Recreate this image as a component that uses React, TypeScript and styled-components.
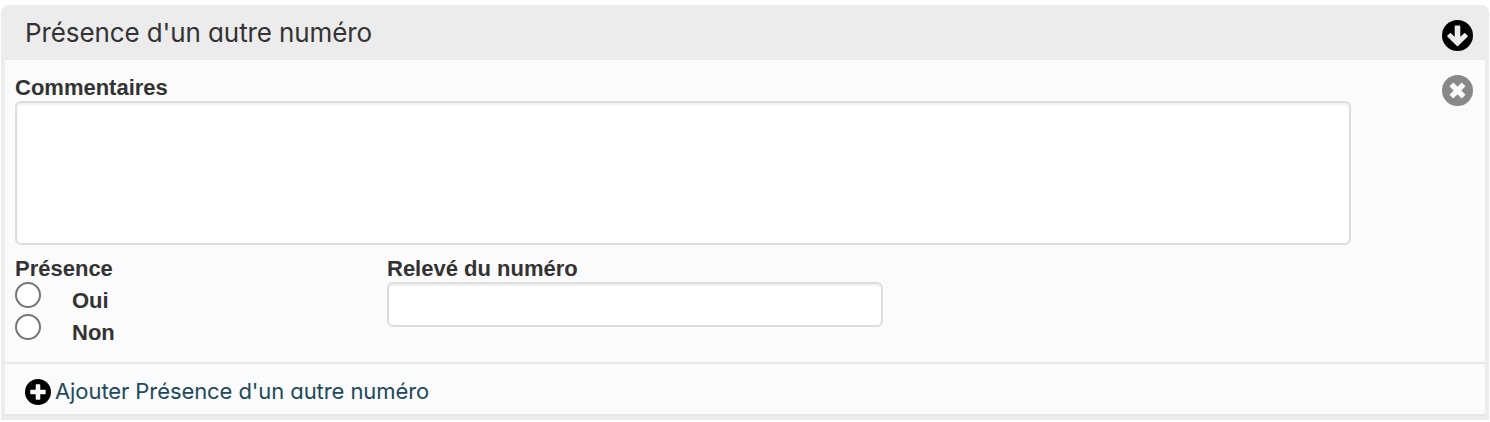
import React from "react";
import styled, { createGlobalStyle } from "styled-components";

const GlobalStyle = createGlobalStyle`
  *, *::before, *::after { box-sizing: border-box; }
  body {
    margin: 0;
    background: #fff;
    color: #333;
    font: bold 22px/26px "Liberation Sans", Arial, sans-serif;
  }
`;

const Panel = styled.section`
  height: 415px;
  margin: 5px 1px 0;
  padding: 0 4px 4px;
  background: #ececec;
  border-radius: 8px 8px 0 0;
`;

const Header = styled.header`
  display: flex;
  justify-content: space-between;
  height: 55px;
  padding: 15px 12px 0 20px;
`;

const Title = styled.h2`
  margin: -2px 0 0;
  font: 400 26px/30px Inter, sans-serif;
  font-feature-settings: "cv11";
  letter-spacing: -0.1px;
  white-space: nowrap;
`;

const IconButton = styled.button`
  display: block;
  flex: none;
  height: 31px;
  padding: 0;
  border: 0;
  background: none;
`;

const Icon = styled.svg`
  display: block;
  flex: none;
`;

const Body = styled.div`
  display: flex;
  justify-content: space-between;
  height: 302px;
  padding: 15px 12px 0 10px;
  background: #fbfbfb;
`;

const Fields = styled.div`
  width: 1336px;
`;

const Label = styled.label`
  display: block;
  height: 26px;
  white-space: nowrap;
`;

const TextArea = styled.textarea`
  display: block;
  width: 100%;
  height: 144px;
  border: 2px solid #ddd;
  border-radius: 6px;
  background: #fff;
  box-shadow: inset 0 2px 2px rgba(0, 0, 0, 0.06);
  resize: none;
  outline: none;
`;

const Row = styled.div`
  display: grid;
  grid-template-columns: 372px 496px;
  margin-top: 11px;
`;

const TextInput = styled.input`
  display: block;
  width: 100%;
  height: 45px;
  border: 2px solid #ddd;
  border-radius: 6px;
  background: #fff;
  box-shadow: inset 0 2px 2px rgba(0, 0, 0, 0.06);
  outline: none;
`;

const Choice = styled.label`
  display: flex;
  gap: 31px;
  height: 32px;
`;

const Radio = styled.input`
  appearance: none;
  width: 26px;
  height: 26px;
  margin: 0;
  border: 2px solid #767676;
  border-radius: 50%;
  background: #fff;
`;

const ChoiceText = styled.span`
  padding-top: 6px;
`;

const Footer = styled.footer`
  display: flex;
  height: 54px;
  padding: 15px 20px 0;
  border: solid #e7e7e7;
  border-width: 2px 0;
  background: #fbfbfb;
`;

const AddLink = styled.a`
  display: flex;
  gap: 4px;
  color: #204a5b;
  font: 400 22px/25px Inter, sans-serif;
  font-feature-settings: "cv11";
  letter-spacing: -0.08px;
  white-space: nowrap;
`;

type Glyph = "down" | "close" | "plus";

const glyphs: Record<Glyph, string> = {
  down: "M13.5 6.3H17.5V18.9L22.6 13.9L25 16.2L15.5 25.4L6 16.2L8.4 13.9L13.5 18.9Z",
  close: "M11.3 8.5L15.5 12.7L19.7 8.5L22.5 11.3L18.3 15.5L22.5 19.7L19.7 22.5L15.5 18.3L11.3 22.5L8.5 19.7L12.7 15.5L8.5 11.3Z",
  plus: "M13.6 7.1H17.4V13.6H23.9V17.4H17.4V23.9H13.6V17.4H7.1V13.6H13.6Z",
};

function CircleIcon({ glyph, size = 31, fill = "#000", ink = "#fbfbfb" }: {
  glyph: Glyph; size?: number; fill?: string; ink?: string;
}) {
  return (
    <Icon width={size} height={size} viewBox="0 0 31 31" aria-hidden="true">
      <circle cx="15.5" cy="15.5" r="15.5" fill={fill} />
      <path d={glyphs[glyph]} fill={ink} stroke={ink} strokeWidth="1.6" strokeLinejoin="round" />
    </Icon>
  );
}

export default function App() {
  return (
    <>
      <GlobalStyle />
      <Panel>
        <Header>
          <Title>Présence d'un autre numéro</Title>
          <IconButton aria-label="Déplacer vers le bas"><CircleIcon glyph="down" ink="#ececec" /></IconButton>
        </Header>
        <Body>
          <Fields>
            <Label htmlFor="comments">Commentaires</Label>
            <TextArea id="comments" />
            <Row>
              <div>
                <Label as="div">Présence</Label>
                <Choice><Radio type="radio" name="presence" /><ChoiceText>Oui</ChoiceText></Choice>
                <Choice><Radio type="radio" name="presence" /><ChoiceText>Non</ChoiceText></Choice>
              </div>
              <div>
                <Label htmlFor="number">Relevé du numéro</Label>
                <TextInput id="number" />
              </div>
            </Row>
          </Fields>
          <IconButton aria-label="Supprimer"><CircleIcon glyph="close" fill="#888" /></IconButton>
        </Body>
        <Footer>
          <AddLink><CircleIcon glyph="plus" size={26} />Ajouter Présence d'un autre numéro</AddLink>
        </Footer>
      </Panel>
    </>
  );
}
